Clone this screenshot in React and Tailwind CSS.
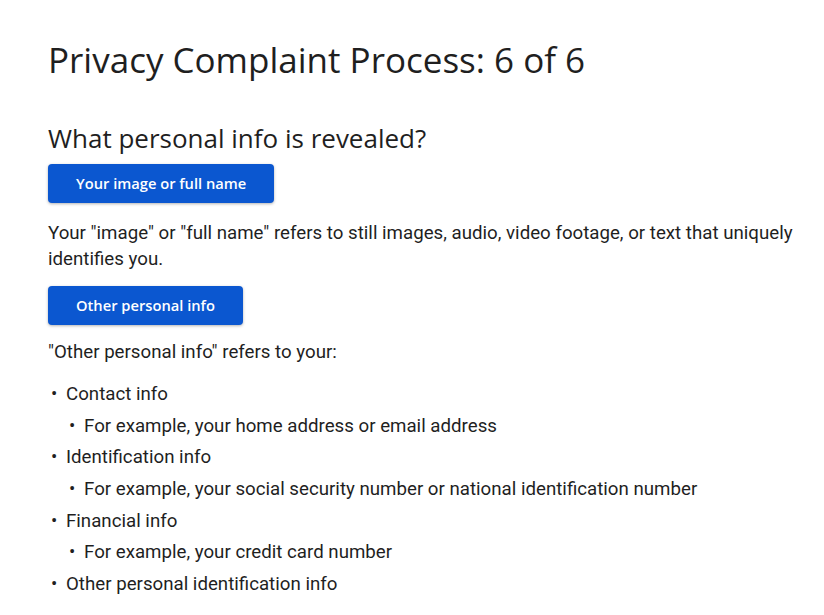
import React from 'react';

const heading = { fontFamily: '"Open Sans", "Liberation Sans", sans-serif' };

const items = [
  { label: 'Contact info', sub: 'For example, your home address or email address' },
  { label: 'Identification info', sub: 'For example, your social security number or national identification number' },
  { label: 'Financial info', sub: 'For example, your credit card number' },
  { label: 'Other personal identification info' },
];

const Bullet = ({ children, className = '' }) => (
  <li className={`flex items-start ${className}`}>
    <span className="w-[18px] shrink-0 pl-[3px]">•</span>
    <span>{children}</span>
  </li>
);

const BlueButton = ({ children, className = '' }) => (
  <button
    className={`h-[39px] rounded-[4px] bg-[#0b57d0] px-7 text-[14.7px] font-semibold text-white shadow-[0_1px_3px_rgba(0,0,0,0.3)] ${className}`}
    style={heading}
  >
    {children}
  </button>
);

export default function App() {
  return (
    <div className="min-h-screen bg-white pl-12 pr-2 pt-[38px] text-[#1f1f1f] font-['Roboto',sans-serif]">
      <h1 className="text-[35px] leading-[44px] font-normal" style={heading}>
        Privacy Complaint Process: 6 of 6
      </h1>

      <h2 className="mt-[40px] text-[26px] leading-[32px]" style={heading}>
        What personal info is revealed?
      </h2>

      <BlueButton className="mt-[10px]">Your image or full name</BlueButton>

      <p className="mt-[17px] text-[18.7px] leading-[26px]">
        Your "image" or "full name" refers to still images, audio, video footage, or text that uniquely identifies you.
      </p>

      <BlueButton className="mt-[14px]">Other personal info</BlueButton>

      <p className="mt-[14px] text-[18.7px] leading-[26px]">"Other personal info" refers to your:</p>

      <ul className="mt-[16px] text-[18.7px] leading-[26px]">
        {items.map((it) => (
          <React.Fragment key={it.label}>
            <Bullet className="mt-[5.7px]">{it.label}</Bullet>
            {it.sub && (
              <Bullet className="mt-[5.7px] ml-[18px]">{it.sub}</Bullet>
            )}
          </React.Fragment>
        ))}
      </ul>
    </div>
  );
}
